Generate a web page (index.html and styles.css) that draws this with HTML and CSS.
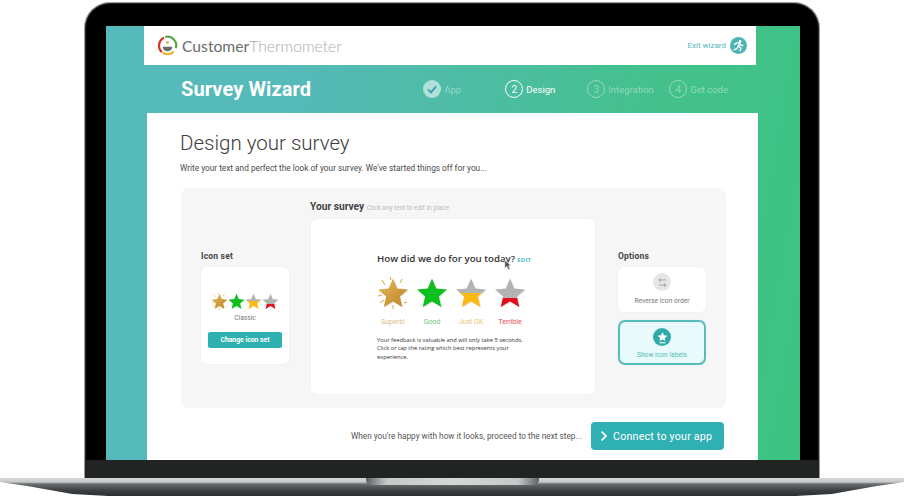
FILE: index.html
```html
<!DOCTYPE html>
<html lang="en">
<head>
  <meta charset="UTF-8" />
  <title>Survey Wizard</title>
  <link rel="stylesheet" href="styles.css">
</head>
<body>

  <svg class="defs" width="0" height="0">
    <defs>
      <linearGradient id="gold" x1="0" y1="0" x2="1" y2="1">
        <stop offset="0" stop-color="#e8bd62" />
        <stop offset="0.55" stop-color="#cf9a3c" />
        <stop offset="1" stop-color="#b98530" />
      </linearGradient>
      <linearGradient id="half-ok" x1="0" y1="0" x2="0" y2="1">
        <stop offset="0.5" stop-color="#b3b3b3" />
        <stop offset="0.5" stop-color="#fdb913" />
      </linearGradient>
      <linearGradient id="half-bad" x1="0" y1="0" x2="0" y2="1">
        <stop offset="0.68" stop-color="#b3b3b3" />
        <stop offset="0.68" stop-color="#e2101d" />
      </linearGradient>
      <symbol id="star" viewBox="0 0 32 32">
        <path d="M16 1.500 L20.300 11.500 L31 12.500 L22.900 19.600 L25.300 30 L16 24.600 L6.700 30 L9.100 19.600 L1 12.500 L11.700 11.500 Z" />
      </symbol>
      <symbol id="burst" viewBox="0 0 32 32">
        <path d="M5 3 L8 8 M13 0 L14 3 M25 2 L23 6 M1 19 L5 18 M3 26 L7 23 M16 28 L16 32 M27 26 L30 25" fill="none" stroke="#d3a347" stroke-width="1" />
      </symbol>
    </defs>
  </svg>

  <div class="laptop">
    <div class="lid">
      <div class="screen">

        <div class="topbar">
          <div class="logo">
            <svg class="logo-mark" viewBox="0 0 24 24" width="21" height="21">
              <path d="M8 3.200 A10 10 0 0 0 5.500 19.500" fill="none" stroke="#d8342b" stroke-width="2.600" />
              <path d="M6.500 20.300 A10 10 0 0 0 19 19" fill="none" stroke="#eeb32f" stroke-width="2.600" />
              <path d="M9.500 2.300 A10 10 0 0 1 21.500 15" fill="none" stroke="#5aa544" stroke-width="2.600" />
              <path d="M6.500 13.500 H17.500 A5.500 5 0 0 1 6.500 13.500 Z" fill="#6b6b6b" />
              <circle cx="12" cy="8.500" r="1.500" fill="#e2a12c" />
            </svg>
            <span class="logo-text"><b>Customer</b>Thermometer</span>
          </div>
          <a class="exit">
            Exit wizard
            <span class="exit-icon">
              <svg viewBox="0 0 16 16" width="13" height="13">
                <circle cx="10" cy="2.800" r="1.500" fill="#fff" />
                <path d="M2.500 7 L6 4.800 H9.500 L8 9 L11 11 L10 15 M7.500 9 L6 12 L2 13.500 M9.500 5.500 L11 7.500 L14 8" fill="none" stroke="#fff" stroke-width="1.700" />
              </svg>
            </span>
          </a>
        </div>

        <div class="wizard-head">
          <div class="wizard-title">Survey Wizard</div>
          <div class="steps">
            <div class="step step-done">
              <span class="step-num">
                <svg viewBox="0 0 18 18" width="12" height="12"><path d="M3 9.500 L7.500 14 L15 5" fill="none" stroke="#3a9fb0" stroke-width="3" /></svg>
              </span>
              App
            </div>
            <div class="step step-current"><span class="step-num">2</span>Design</div>
            <div class="step"><span class="step-num">3</span>Integration</div>
            <div class="step"><span class="step-num">4</span>Get code</div>
          </div>
        </div>

        <div class="page">
          <h1>Design your survey</h1>
          <p class="intro">Write your text and perfect the look of your survey. We've started things off for you...</p>

          <div class="panel">
            <div class="side side-left">
              <div class="side-label">Icon set</div>
              <div class="tile tile-icons">
                <div class="mini-stars">
                  <span class="mini-star">
                    <svg class="star-burst" width="17" height="17"><use href="#burst" /></svg>
                    <svg width="17" height="17" fill="url(#gold)"><use href="#star" /></svg>
                  </span>
                  <svg width="17" height="17" fill="#0fbf1f"><use href="#star" /></svg>
                  <svg width="17" height="17" fill="url(#half-ok)"><use href="#star" /></svg>
                  <svg width="17" height="17" fill="url(#half-bad)"><use href="#star" /></svg>
                </div>
                <div class="tile-text">Classic</div>
                <div class="change-btn">Change icon set</div>
              </div>
            </div>

            <div class="middle">
              <div class="survey-title">Your survey <small>Click any text to edit in place</small></div>
              <div class="survey-card">
                <div class="question">
                  How did we do for you today?<span class="edit">EDIT</span>
                  <svg class="cursor" viewBox="0 0 10 14" width="8" height="12"><path d="M1 1 V11 L3.500 8.800 L5.500 13 L7.500 12 L5.500 8 H9 Z" fill="#555" stroke="#fff" stroke-width="0.600" /></svg>
                </div>
                <div class="ratings">
                  <div class="rating">
                    <span class="big-star">
                      <svg class="star-burst" width="32" height="32"><use href="#burst" /></svg>
                      <svg width="32" height="32" fill="url(#gold)"><use href="#star" /></svg>
                    </span>
                    <span class="rate-label rate-superb">Superb!</span>
                  </div>
                  <div class="rating">
                    <span class="big-star"><svg width="32" height="32" fill="#0fbf1f"><use href="#star" /></svg></span>
                    <span class="rate-label rate-good">Good</span>
                  </div>
                  <div class="rating">
                    <span class="big-star"><svg width="32" height="32" fill="url(#half-ok)"><use href="#star" /></svg></span>
                    <span class="rate-label rate-ok">Just OK</span>
                  </div>
                  <div class="rating">
                    <span class="big-star"><svg width="32" height="32" fill="url(#half-bad)"><use href="#star" /></svg></span>
                    <span class="rate-label rate-bad">Terrible</span>
                  </div>
                </div>
                <p class="survey-note">Your feedback is valuable and will only take 5 seconds. Click or tap the rating which best represents your experience.</p>
              </div>
            </div>

            <div class="side side-right">
              <div class="side-label">Options</div>
              <div class="tile tile-option">
                <span class="opt-icon">
                  <svg viewBox="0 0 18 18" width="13" height="13"><path d="M14 5.500 H4 M7 2.500 L4 5.500 L7 8.500 M4 12.500 H14 M11 9.500 L14 12.500 L11 15.500" fill="none" stroke="#9a9a9a" stroke-width="1.200" /></svg>
                </span>
                <span class="tile-text">Reverse icon order</span>
              </div>
              <div class="tile tile-option tile-on">
                <span class="opt-icon">
                  <svg viewBox="0 0 18 18" width="13" height="13">
                    <path d="M9 1.500 L11 6 L16 6.500 L12.200 9.800 L13.300 14 L9 11.800 L4.700 14 L5.800 9.800 L2 6.500 L7 6 Z" fill="#fff" />
                    <rect x="5" y="15.500" width="8" height="1.500" fill="#fff" />
                  </svg>
                </span>
                <span class="tile-text">Show icon labels</span>
              </div>
            </div>
          </div>

          <div class="next-row">
            <span class="next-text">When you're happy with how it looks, proceed to the next step...</span>
            <a class="next-btn">
              <svg viewBox="0 0 10 14" width="8" height="12"><path d="M2 1.500 L7.500 7 L2 12.500" fill="none" stroke="#fff" stroke-width="2.200" /></svg>
              Connect to your app
            </a>
          </div>
        </div>

      </div>
      <div class="chin"></div>
    </div>
    <div class="base">
      <div class="notch"></div>
    </div>
  </div>

</body>
</html>
```

FILE: styles.css
```css
* {
  margin: 0; padding: 0; box-sizing: border-box;
}

html, body {
  width: 904px;
  height: 496px;
  overflow: hidden;
  background: white;
  font-family: Roboto, sans-serif;
}

.defs {
  display: block;
  height: 0;
}

.laptop {
  display: flex;
  flex-direction: column;
  align-items: center;
  padding-top: 2px;
}

.lid {
  width: 736px;
  height: 476px;
  padding: 23px 20px 0 22px;
  background: black;
  border: 1px solid #9a9a9a;
  border-bottom: 0;
  border-radius: 26px 26px 0 0;
  box-shadow: inset 0 0 0 1px #2a2a2a;
  display: flex;
  flex-direction: column;
}

.screen {
  width: 694px;
  height: 434px;
  flex-shrink: 0;
  margin-left: -1px;
  background: linear-gradient(100deg, #56b9ba 0%, #56b9ba 25%, #45c08f 70%, #3cc480 100%);
  overflow: hidden;
}

.chin {
  height: 18px;
  margin: 0 -20px 0 -22px;
  background: #222423;
}

.base {
  width: 904px;
  height: 18px;
  flex-shrink: 0;
  background: linear-gradient(#d4d6d6 0, #c9cbcb 4px, #6a6e70 6px, #3f4244 12px, #2b2d2f 18px);
  clip-path: polygon(0 0, 100% 0, 100% 4px, 97% 8px, 92% 16px, 88% 100%, 12% 100%, 8% 16px, 3% 8px, 0 4px);
  display: flex;
  justify-content: center;
}

.notch {
  width: 173px;
  height: 7px;
  background: linear-gradient(90deg, #5f6263, #c6c8c8 12%, #d6d8d8 50%, #c6c8c8 88%, #5f6263);
  border-radius: 0 0 5px 5px;
}

/* top bar */
.topbar {
  height: 39px;
  margin: 0 44px 0 38px;
  background: white;
  display: flex;
  align-items: center;
  justify-content: space-between;
  padding: 0 9px 0 13px;
}

.logo {
  display: flex;
  align-items: center;
  gap: 4px;
}

.logo-text {
  font-family: Lato, sans-serif;
  font-size: 15.700px;
  font-weight: 300;
  color: #a9abab;
}

.logo-text b {
  font-weight: 400;
  color: #6a6c6c;
}

.exit {
  display: flex;
  align-items: center;
  gap: 4px;
  font-size: 8px;
  color: #55b7b5;
}

.exit-icon {
  width: 17px;
  height: 17px;
  border-radius: 50%;
  background: #4fb3b6;
  display: flex;
  align-items: center;
  justify-content: center;
}

/* wizard header */
.wizard-head {
  height: 48px;
  padding: 0 72px 0 75px;
  display: flex;
  align-items: center;
  justify-content: space-between;
  color: white;
}

.wizard-title {
  font-size: 20px;
  font-weight: 700;
  letter-spacing: 0.1px;
}

.steps {
  display: flex;
}

.step {
  width: 82px;
  display: flex;
  align-items: center;
  gap: 3px;
  font-size: 9.500px;
  color: rgba(255, 255, 255, 0.4);
}

.step:last-child {
  width: auto;
}

.step-num {
  width: 18px;
  height: 18px;
  border: 1px solid rgba(255, 255, 255, 0.4);
  border-radius: 50%;
  display: flex;
  align-items: center;
  justify-content: center;
  font-size: 10px;
}

.step-done .step-num {
  background: rgba(255, 255, 255, 0.55);
  border: 0;
}

.step-current {
  color: white;
}

.step-current .step-num {
  border-color: white;
}

/* main card */
.page {
  width: 611px;
  height: 347px;
  margin-left: 41px;
  background: white;
  padding: 17px 33px 0;
}

h1 {
  font-size: 20.500px;
  font-weight: 300;
  line-height: 26px;
  color: #3c3c3c;
}

.intro {
  margin-top: 6px;
  font-size: 8.280px;
  line-height: 12px;
  color: #4a4a4a;
}

.panel {
  margin-top: 14px;
  width: 545px;
  height: 220px;
  margin-left: 1px;
  background: #f6f6f6;
  border-radius: 8px;
  display: flex;
  padding-left: 20px;
}

.side {
  width: 88px;
  padding-top: 62px;
}

.side-label {
  font-size: 8.500px;
  font-weight: 700;
  line-height: 12px;
  color: #444;
  margin-bottom: 5px;
  letter-spacing: 0.2px;
}

.tile {
  background: white;
  border-radius: 6px;
  box-shadow: 0 0 2px rgba(0, 0, 0, 0.05);
}

.tile-text {
  font-size: 6.700px;
  color: #777;
}

.tile-icons {
  height: 97px;
  display: flex;
  flex-direction: column;
  align-items: center;
  padding-top: 26px;
}

.mini-stars {
  display: flex;
}

.mini-stars svg {
  display: block;
}

.mini-star,
.big-star {
  position: relative;
  display: block;
}

.star-burst {
  position: absolute;
  top: 0;
  left: 0;
}

.tile-icons .tile-text {
  margin-top: 4px;
}

.change-btn {
  margin-top: 10px;
  width: 74px;
  height: 16px;
  border-radius: 2px;
  background: #2fb0b0;
  color: white;
  font-size: 6.800px;
  font-weight: 700;
  text-align: center;
  line-height: 16px;
}

.middle {
  width: 284px;
  margin: 0 23px 0 22px;
}

.survey-title {
  height: 31px;
  padding-top: 12px;
  font-size: 10.200px;
  font-weight: 700;
  line-height: 14px;
  color: #444;
  margin-left: -1px;
}

.survey-title small {
  font-size: 6.500px;
  font-weight: 400;
  color: #bcbcbc;
}

.survey-card {
  height: 175px;
  background: white;
  border-radius: 6px;
  box-shadow: 0 0 2px rgba(0, 0, 0, 0.06);
  padding: 33px 0 0 66px;
  font-family: "Open Sans", sans-serif;
}

.question {
  position: relative;
  font-size: 9.700px;
  font-weight: 600;
  line-height: 14px;
  color: #333;
}

.edit {
  margin-left: 2px;
  font-size: 6px;
  font-weight: 700;
  letter-spacing: 0.2px;
  color: #55c0c0;
}

.cursor {
  position: absolute;
  left: 127px;
  top: 7px;
}

.ratings {
  display: flex;
  margin-top: 10px;
  gap: 7px;
}

.rating {
  width: 32px;
  display: flex;
  flex-direction: column;
  align-items: center;
}

.big-star svg {
  display: block;
  filter: drop-shadow(1px 1px 0 #e9e9e9);
}

.big-star .star-burst {
  filter: none;
}

.rate-label {
  margin-top: 9px;
  font-family: Roboto, sans-serif;
  font-size: 7px;
  white-space: nowrap;
}

.rate-superb { color: #d8b98b; }
.rate-good { color: #6dc775; }
.rate-ok { color: #f0c274; }
.rate-bad { color: #e8464f; }

.survey-note {
  margin-top: 10px;
  width: 150px;
  font-size: 5.750px;
  line-height: 8.300px;
  color: #333;
}

.tile-option {
  height: 45px;
  display: flex;
  flex-direction: column;
  align-items: center;
  padding-top: 6px;
  gap: 6px;
  margin-bottom: 8px;
}

.opt-icon {
  width: 18px;
  height: 18px;
  border-radius: 50%;
  background: #e6e6e6;
  display: flex;
  align-items: center;
  justify-content: center;
}

.tile-on {
  background: #e8fafb;
  border: 2px solid #55bcb9;
  border-radius: 7px;
  padding-top: 6px;
  gap: 5px;
}

.tile-on .opt-icon {
  background: #2fa9a9;
}

.tile-on .tile-text {
  color: #55bcb9;
}

.next-row {
  margin-top: 14px;
  display: flex;
  align-items: center;
  justify-content: flex-end;
  gap: 9px;
  width: 544px;
}

.next-text {
  font-size: 8.250px;
  color: #555;
}

.next-btn {
  width: 133px;
  height: 28px;
  border-radius: 4px;
  background: #2fb0b3;
  color: white;
  font-size: 10.700px;
  letter-spacing: 0.2px;
  display: flex;
  align-items: center;
  gap: 5px;
  padding-left: 9px;
}
```
